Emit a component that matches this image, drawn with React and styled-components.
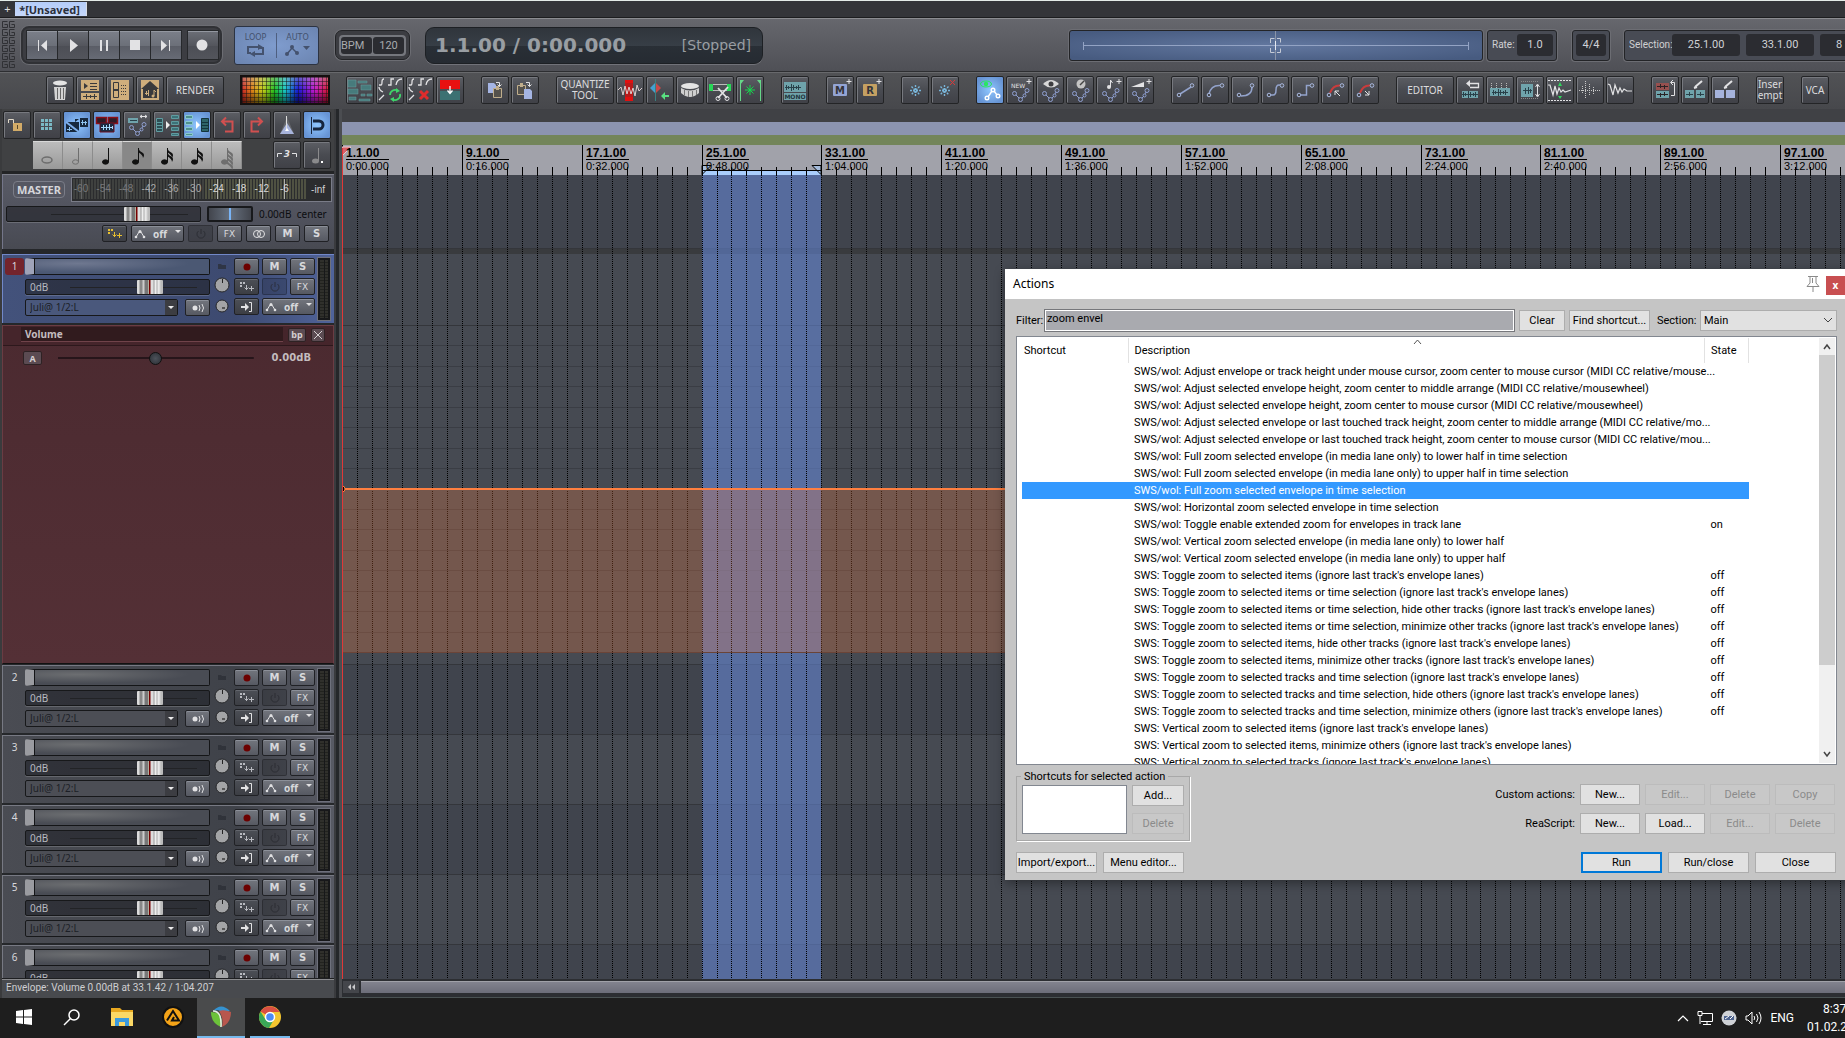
import React from 'react'
import styled, { createGlobalStyle, css } from 'styled-components'

const ui = '"Noto Sans", "Open Sans", sans-serif'
const small = 'Roboto, "Liberation Sans", sans-serif'
const arial = '"Liberation Sans", Arial, sans-serif'

const GlobalStyle = createGlobalStyle`
  * {
    box-sizing: border-box;
  }
  body {
    margin: 0;
    background: #47494d;
    overflow: hidden;
  }
  button, input, select {
    font: inherit;
    color: inherit;
    margin: 0;
    padding: 0;
    border: 0;
    border-radius: 0;
  }
`

const Page = styled.div`
  position: relative;
  display: flex;
  flex-direction: column;
  height: 100vh;
  overflow: hidden;
  background: #47494d;
  color: #d0d0d2;
  font: 11px/14px ${ui};
`

/* ---------- project tabs ---------- */

const TabBar = styled.div`
  flex: none;
  display: flex;
  align-items: center;
  height: 18px;
  padding-left: 2px;
  border-top: 1px solid #e4ece8;
  border-bottom: 1px solid #1c1d1f;
  background: #343539;
`

const AddTab = styled.button`
  width: 11px;
  background: none;
  color: #e0e0e0;
  font: 11px/14px ${ui};
`

const Tab = styled.button`
  width: 72px;
  height: 14px;
  margin-left: 2px;
  padding-right: 2px;
  background: linear-gradient(#b4ccf8, #c6d8fa);
  border-right: 1px solid #d8dce4;
  color: #2b303c;
  white-space: nowrap;
  font: bold 11px/13px ${ui};
`

/* ---------- transport ---------- */

const Transport = styled.div`
  flex: none;
  display: flex;
  align-items: center;
  height: 54px;
  padding-left: 2px;
  border-top: 1px solid #8b8c90;
  border-bottom: 1px solid #2d2e31;
  background: linear-gradient(#66676d, #4f5056);
  overflow: hidden;
`

const Well = styled.div`
  flex: none;
  display: flex;
  align-items: center;
  border: 1px solid #232427;
  box-shadow: 0 0 0 1px #6c6d73;
  background: #3c3d42;
`

const PlayWell = styled(Well)`
  gap: 5px;
  height: 38px;
  width: 201px;
  margin-left: 6px;
  padding: 0 3px;
  border: 2px solid #303135;
  border-radius: 8px;
`

const PlayGroup = styled.div`
  display: flex;
  gap: 1px;
  border: 1px solid #26282b;
  background: #26282b;
`

const PlayButton = styled.button`
  display: block;
  width: 30px;
  height: 28px;
  border-top: 1px solid #9397a0;
  background: ${({ $dark }) => $dark
    ? 'linear-gradient(#6a6d75, #54565d 50%, #4c4e55 51%, #53555c)'
    : 'linear-gradient(#7a7e88, #6c7079 50%, #5a5d66 51%, #676b75)'};
`

const LoopAuto = styled.div`
  flex: none;
  display: flex;
  width: 85px;
  height: 39px;
  margin-left: 12px;
  padding: 6px 0;
  border: 1px solid #2c3342;
  border-radius: 3px;
  background: radial-gradient(#7f9cce, #6b84b0);
`

const LoopButton = styled.button`
  flex: 1;
  display: flex;
  flex-direction: column;
  align-items: center;
  background: none;
  color: #44526e;
  font: 8px/10px "DejaVu Sans", sans-serif;
  & + & {
    border-left: 1px solid #4e5f80;
  }
`

const BpmWell = styled(Well)`
  width: 75px;
  height: 30px;
  margin-left: 16px;
  padding: 3px;
  border-radius: 7px;
`

const BpmInner = styled.div`
  display: flex;
  flex: 1;
  gap: 1px;
  padding: 2px;
  border-radius: 4px;
  background: #75777d;
`

const DarkBox = styled.span`
  flex: none;
  display: block;
  width: ${({ $w }) => $w}px;
  height: 22px;
  border-radius: 3px;
  background: #2b2c31;
  color: #d0d2d6;
  text-align: center;
  font: 11px/22px ${small};
  & + & {
    margin-left: 6px;
  }
`

const BpmBox = styled.span`
  width: 31px;
  height: 17px;
  border-radius: 3px;
  background: #2b2c31;
  color: #a8aaad;
  text-align: ${({ $left }) => $left ? 'left' : 'center'};
  font: 11px/17px ${small};
`

const BigTime = styled.div`
  flex: none;
  display: flex;
  justify-content: space-between;
  align-items: center;
  width: 338px;
  height: 37px;
  margin-left: 15px;
  padding: 0 11px 0 9px;
  border: 1px solid #1d2024;
  border-radius: 9px;
  box-shadow: 0 1px 0 #717279;
  background: linear-gradient(#30353c, #373e46 50%, #292f36 51%, #262b32);
  color: #999ea3;
  font: 14px/20px "DejaVu Sans", sans-serif;
  strong {
    font-size: 20px;
  }
`

const Shuttle = styled(Well)`
  width: 414px;
  height: 31px;
  margin-left: auto;
  border-radius: 3px;
  background: radial-gradient(ellipse at center, #62779f, #475b80 90%);
`

const InfoWell = styled(Well)`
  height: 31px;
  margin-left: ${({ $gap }) => $gap}px;
  margin-right: ${({ $bleed }) => $bleed ? -17 : 0}px;
  padding: 0 3px 0 ${({ $pad }) => $pad}px;
  border-radius: 3px;
  background: #484b54;
  font: 10px/22px ${small};
`

const InfoLabel = styled.span`
  width: ${({ $w }) => $w}px;
  white-space: nowrap;
`

/* ---------- toolbars ---------- */

const Toolbar = styled.div`
  flex: none;
  display: flex;
  gap: 17px;
  height: 37px;
  padding: 3px 0 0 46px;
  border-top: 1px solid #68696c;
  background: linear-gradient(#515255, #47484c);
  overflow: hidden;
`

const Group = styled.div`
  flex: none;
  display: flex;
  gap: 2px;
`

const ToolButton = styled.button`
  flex: none;
  width: ${({ $w }) => $w || 28}px;
  height: 28px;
  border: 1px solid #232426;
  border-radius: 2px;
  box-shadow: inset 1px 1px 0 #77797f;
  background: linear-gradient(#5c5e64, #494b51 50%, #404147);
  color: #dcdcde;
  font: 10px/11px ${ui};
  svg {
    display: block;
    margin: -1px;
  }
  ${({ $on }) => $on && css`
    box-shadow: none;
    background: radial-gradient(#8ec6ff, #6794d4 80%);
  `}
`

const Palette = styled.button`
  width: 90px;
  height: 30px;
  margin: -1px -1px 0;
  border: 2px solid #15100f;
  background:
    repeating-linear-gradient(90deg, rgba(20, 20, 20, 0.5) 0 1px, transparent 1px 4px),
    repeating-linear-gradient(rgba(20, 20, 20, 0.5) 0 1px, transparent 1px 4px),
    linear-gradient(rgba(170, 170, 170, 0.5), rgba(100, 100, 100, 0.1) 50%, rgba(0, 0, 0, 0.6)),
    linear-gradient(90deg, #e02020, #f08a10 12%, #d8e010 24%, #18d018 38%, #10d8d8 50%, #1010e8 65%, #d010e0 84%, #e81030);
`

const Columns = styled.div`
  flex: 1;
  min-height: 0;
  display: flex;
`

const Left = styled.div`
  flex: none;
  display: flex;
  flex-direction: column;
  width: 334px;
  border-left: 2px solid #3a3b3d;
  background: #3f4043;
`

const LeftTools = styled.div`
  flex: none;
  display: flex;
  flex-direction: column;
  gap: 2px;
  height: 65px;
  padding: 2px 0 0 1px;
  background: #404143;
  border-bottom: 3px solid #232426;
`

const NoteRow = styled.div`
  display: flex;
  padding-left: 30px;
  gap: 2px;
`

const Notes = styled.div`
  display: flex;
  width: 209px;
  height: 28px;
  margin-right: 29px;
`

const NoteButton = styled.button`
  flex: 1;
  border-right: 1px solid #8c8c8c;
  border-top: 1px solid #d8d8d8;
  background: ${({ $dark }) => $dark ? '#888' : 'linear-gradient(#bcbcbc, #999)'};
  svg {
    display: block;
  }
`

/* ---------- track panel ---------- */

const Small = styled.button`
  flex: none;
  display: flex;
  align-items: center;
  justify-content: center;
  width: ${({ $w }) => $w || 25}px;
  height: 17px;
  border: 1px solid #202125;
  border-radius: 2px;
  box-shadow: inset 0 1px 0 #8b8f98;
  background: linear-gradient(#72757d, #565962);
  color: #d8d9dc;
  font: bold 10px/14px "DejaVu Sans", sans-serif;
  ${({ $sunk }) => $sunk && css`
    box-shadow: none;
    background: rgba(0, 0, 0, 0.16);
    border-color: rgba(0, 0, 0, 0.25);
  `}
  ${({ $dark }) => $dark && css`
    background: linear-gradient(#4c4f56, #3c3e44);
    box-shadow: inset 0 1px 0 #63666d;
  `}
`

const Fx = styled.span`
  font: 9px/14px "DejaVu Sans", sans-serif;
`

const Off = styled.span`
  margin: 0 8px 0 7px;
  font: bold 10px/14px ${ui};
`

const Master = styled.div`
  flex: none;
  display: flex;
  flex-direction: column;
  height: 75px;
  padding: 2px 2px 0 4px;
  border-top: 1px solid #7d7f8a;
  border-left: 1px solid #74768a;
  background: linear-gradient(#595b66, #4f515c 60%, #484a52);
`

const MasterTop = styled.div`
  display: flex;
  gap: 6px;
  padding-left: 6px;
  height: 26px;
`

const MasterLabel = styled.button`
  width: 52px;
  height: 17px;
  margin-top: 4px;
  border: 1px solid #7b7d88;
  border-radius: 4px;
  background: #555762;
  color: #d6d6da;
  font: bold 11px/14px ${ui};
`

const Meter = styled.div`
  display: flex;
  flex: 1;
  justify-content: space-between;
  height: 25px;
  padding-right: 6px;
  border: 1px solid #7a7c88;
  background: #2b2c2e;
  font: 10px/23px ${arial};
`

const Fader = styled.div`
  display: flex;
  align-items: center;
  width: ${({ $w }) => $w}px;
  height: 16px;
  padding-right: 12px;
  border: 1px solid #17181a;
  border-radius: 2px;
  background: rgba(34, 36, 42, 0.62);
  box-shadow: 0 1px 0 rgba(255, 255, 255, 0.16);
  color: #b8bac0;
  font: 10px/14px ${ui};
  label {
    flex: none;
    width: 44px;
    padding-left: 4px;
  }
`

const Slider = styled.input`
  appearance: none;
  flex: 1;
  min-width: 0;
  height: 14px;
  background: linear-gradient(#222326, #222326) center / 100% 1px no-repeat;
  &::-webkit-slider-thumb {
    appearance: none;
    width: 26px;
    height: 14px;
    border-radius: 1px;
    background: linear-gradient(90deg, #ddd 0 2px, #888 3px 5px, #ccc 6px 7px, #777 8px 11px, #e8e8c8 12px, #700 12px 13px, #ddd 14px 16px, #999 17px, #eee 18px 19px, #aaa 20px, #e8e8e8 21px 22px, #bbb 24px 26px);
  }
`

const MasterFaders = styled.div`
  display: flex;
  align-items: center;
  gap: 6px;
  height: 22px;
  margin-left: -1px;
  color: #0c0d10;
  font: 10px/14px ${ui};
  > span {
    white-space: nowrap;
  }
`

const Pan = styled.div`
  width: 46px;
  height: 16px;
  border: 2px solid #18191c;
  border-radius: 2px;
  background:
    linear-gradient(#79b4f6, #79b4f6) center / 2px 100% no-repeat,
    linear-gradient(90deg, #42454d, #66707e, #42454d);
`

const ButtonRow = styled.div`
  display: flex;
  justify-content: flex-end;
  gap: 4px;
  padding-right: 3px;
`

const Tracks = styled.div`
  flex: 1;
  min-height: 0;
  overflow: hidden;
  padding-top: 5px;
  border-bottom: 1px solid #1e1f21;
  background: #25272a;
`

const TrackBox = styled.section`
  display: grid;
  grid-template-columns: 17px 185px 18px 81px 13px;
  column-gap: 3px;
  align-items: start;
  height: ${({ $on }) => $on ? 69 : 68}px;
  margin-bottom: 2px;
  padding: 3px 0 0 2px;
  border-top: 1px solid ${({ $on }) => $on ? '#7288c8' : '#777983'};
  border-left: 1px solid ${({ $on }) => $on ? '#7288c8' : '#777983'};
  background: ${({ $on }) => $on
    ? 'linear-gradient(90deg, #43527b, #3d4a70 70%, #50639a)'
    : 'linear-gradient(90deg, #4a4c53, #3f4249 70%, #585a64)'};
`

const TrackNo = styled.span`
  width: 19px;
  height: 17px;
  border-radius: 3px;
  background: ${({ $on }) => $on ? '#74242c' : 'none'};
  color: #d8d8dc;
  text-align: center;
  font: 10px/17px ${ui};
`

const Stack = styled.div`
  display: flex;
  flex-direction: column;
  gap: 4px;
`

const NameInput = styled.input`
  display: block;
  width: 185px;
  height: 17px;
  border: 1px solid #141517;
  border-left: 9px solid ${({ $on }) => $on ? '#9fa3b8' : '#9a9ba0'};
  border-radius: 2px;
  box-shadow: inset 1px 0 0 #141517;
  background: ${({ $on }) => $on
    ? 'radial-gradient(ellipse at 25% 30%, #6f7890, #4b5873 60%)'
    : 'radial-gradient(ellipse at 25% 30%, #6c6e71, #494c54 60%)'};
`

const InRow = styled.div`
  display: flex;
  justify-content: space-between;
`

const InputPick = styled.span`
  position: relative;
  width: 153px;
  select {
    appearance: none;
    display: block;
    width: 153px;
    height: 17px;
    padding-left: 4px;
    border: 1px solid #17181a;
    border-radius: 2px;
    background: ${({ $on }) => $on ? '#4a587c' : '#4c4e55'};
    color: #1c1f26;
    font: 10px/15px ${ui};
  }
  svg {
    position: absolute;
    right: 1px;
    top: 1px;
    pointer-events: none;
  }
`

const KnobColumn = styled(Stack)`
  align-items: center;
  gap: 5px;
  padding-top: 4px;
  svg {
    display: block;
  }
`

const Cells = styled.div`
  display: grid;
  grid-template-columns: 25px 25px 25px;
  gap: 3px;
`

const SideMeter = styled.div`
  width: 12px;
  height: 62px;
  border: 2px solid #17181a;
  outline: 1px solid #6e707c;
  background:
    linear-gradient(#17181a, #17181a) center / 1px 100% no-repeat,
    repeating-linear-gradient(#30302c 0 2px, #22231f 2px 3px);
`

const EnvBox = styled.section`
  height: 339px;
  margin-bottom: 1px;
  border: 1px solid #6a3c43;
  border-bottom: 1px solid #111;
  background: linear-gradient(#4b2a30, #543036);
  color: #c3bcbe;
`

const EnvHead = styled.div`
  display: flex;
  align-items: center;
  height: 20px;
  padding: 0 8px 2px 18px;
  gap: 5px;
  border-bottom: 1px solid #2d181c;
  background: #45252b;
`

const EnvName = styled.div`
  flex: 1;
  height: 15px;
  padding-left: 4px;
  border-bottom: 1px solid #70434a;
  background: #311b1e;
  font: bold 10px/14px ${ui};
`

const EnvButton = styled.button`
  width: ${({ $w }) => $w}px;
  height: 14px;
  border: 1px solid #2e2224;
  border-radius: 2px;
  background: #5b4b52;
  color: #d5cfd1;
  font: bold 9px/11px ${ui};
  svg {
    display: block;
    margin: auto;
  }
`

const EnvBody = styled.div`
  display: flex;
  align-items: center;
  height: 24px;
  padding: 0 22px 0 20px;
  font: bold 10px/14px "DejaVu Sans", sans-serif;
`

const EnvSlider = styled(Slider)`
  margin: 0 18px 0 16px;
  background: linear-gradient(#26151a, #26151a) center / 100% 2px no-repeat;
  &::-webkit-slider-thumb {
    width: 13px;
    height: 13px;
    border: 1px solid #111;
    border-radius: 50%;
    background: radial-gradient(#4d525a, #2a2e34);
  }
`

const Status = styled.div`
  flex: none;
  height: 19px;
  padding-left: 4px;
  border-top: 1px solid #8a8b8e;
  background: #484a4e;
  color: #cfcfd1;
  font: 10px/15px ${small};
`

/* ---------- arrange ---------- */

const Splitter = styled.div`
  flex: none;
  width: 8px;
  border-left: 2px solid #3a3b3e;
  border-right: 3px solid #4b4d51;
  background: #25272a;
`

const Arrange = styled.main`
  flex: 1;
  min-width: 0;
  display: flex;
  flex-direction: column;
`

const Strip = styled.div`
  flex: none;
  height: ${({ $h }) => $h}px;
  background: ${({ $c }) => $c};
`

const Ruler = styled.div`
  flex: none;
  position: relative;
  display: flex;
  height: 30px;
  overflow: hidden;
  background: #a1a2aa;
  color: #000;
  > svg {
    position: absolute;
    inset: 0;
  }
`

const Mark = styled.div`
  position: relative;
  flex: none;
  padding: 2px 0 0 4px;
  font: 11px/13px ${arial};
  strong {
    display: block;
    width: 43px;
    height: 13px;
    border-bottom: 1px solid #000;
    font-size: 12px;
    line-height: 12px;
  }
  span {
    display: block;
    white-space: nowrap;
  }
`

const Canvas = styled.div`
  position: relative;
  flex: 1;
  min-height: 0;
  overflow: hidden;
  background: #40444d;
  > svg {
    position: absolute;
    inset: 0;
  }
`

const Lane = styled.div`
  height: ${({ $h }) => $h}px;
  border-bottom: 1px solid #34363b;
  background: ${({ $light }) => $light ? '#464a52' : '#40444d'};
`

const LaneGap = styled.div`
  height: 5px;
  background: #393b3e;
`

const HScroll = styled.div`
  flex: none;
  display: flex;
  align-items: center;
  gap: 2px;
  height: 19px;
  padding: 0 0 2px 1px;
  background: #2c2e32;
  border-bottom: 1px solid #4a5253;
`

const ScrollLeft = styled.button`
  width: 16px;
  height: 12px;
  background: #44464b;
  svg {
    display: block;
    margin: auto;
  }
`

const ScrollThumb = styled.div`
  flex: 1;
  height: 12px;
  border-top: 1px solid #a0a1a8;
  background: linear-gradient(#82838e, #6c6d79);
`

/* ---------- actions window ---------- */

const Dialog = styled.div`
  position: absolute;
  left: 1005px;
  top: 269px;
  width: 844px;
  background: #c5c5c5;
  box-shadow: 0 3px 10px rgba(0, 0, 0, 0.4);
  color: #000;
  font: 11px/17px ${small};
`

const TitleBar = styled.header`
  display: flex;
  align-items: center;
  height: 30px;
  padding: 0 0 0 8px;
  background: #fff;
  font: 12px/16px ${ui};
  span {
    flex: 1;
  }
`

const CloseX = styled.button`
  width: 23px;
  height: 19px;
  margin: 2px 0 0 5px;
  padding-right: 4px;
  background: #c84f51;
  color: #fff;
  font: bold 10px/16px ${ui};
`

const DialogBody = styled.div`
  padding: 10px 12px 7px 11px;
`

const FilterRow = styled.div`
  display: flex;
  align-items: center;
  gap: 4px;
  height: 23px;
  margin-bottom: 4px;
`

const FilterLabel = styled.label`
  width: 24px;
  white-space: nowrap;
`

const SectionLabel = styled.label`
  width: 39px;
  margin-left: 3px;
  white-space: nowrap;
`

const FilterInput = styled.input`
  flex: 1;
  min-width: 0;
  height: 23px;
  padding: 0 2px 4px;
  border: 1px solid #76777b;
  outline: 1px solid #fff;
  outline-offset: -2px;
  background: #a9aaaf;
`

const WinButton = styled.button`
  flex: none;
  width: ${({ $w }) => $w || 81}px;
  height: 21px;
  border: 1px solid #adadad;
  background: #e1e1e1;
  text-align: center;
  white-space: nowrap;
  ${({ $main }) => $main && css`
    border: 2px solid #0078d7;
  `}
  &:disabled {
    border-color: #bcbcbc;
    background: #c8c8c8;
    color: #8b8b8b;
  }
`

const SectionPick = styled.span`
  position: relative;
  width: 137px;
  select {
    appearance: none;
    display: block;
    width: 137px;
    height: 21px;
    padding: 0 3px;
    border: 1px solid #adadad;
    background: #e1e1e1;
  }
  svg {
    position: absolute;
    right: 4px;
    top: 6px;
    pointer-events: none;
  }
`

const ListBox = styled.div`
  display: flex;
  justify-content: space-between;
  align-items: flex-start;
  height: 429px;
  padding: 1px 1px 1px 5px;
  border: 1px solid #828790;
  background: #fff;
  overflow: hidden;
`

const ListTable = styled.table`
  width: 727px;
  table-layout: fixed;
  border-collapse: collapse;
  th {
    position: relative;
    height: 25px;
    padding: 0 6px;
    border-right: 1px solid #e2e2e2;
    font-weight: normal;
    text-align: left;
  }
  th:first-child {
    width: 106px;
    padding-left: 2px;
  }
  th:last-child {
    width: 44px;
  }
  th svg {
    position: absolute;
    left: 284px;
    top: 1px;
  }
  td {
    height: 17px;
    padding: 0 0 0 6px;
    white-space: nowrap;
  }
`

const ActionRow = styled.tr`
  ${({ $on }) => $on && css`
    background: #3399ff;
    color: #fff;
  `}
`

const VScroll = styled.div`
  display: flex;
  flex-direction: column;
  width: 16px;
  height: 425px;
  background: #f0f0f0;
  svg {
    flex: none;
    display: block;
  }
`

const VThumb = styled.div`
  height: 310px;
  margin-bottom: auto;
  background: #cdcdcd;
`

const Bottom = styled.div`
  display: grid;
  grid-template-columns: 173px 1fr;
  margin-top: 3px;
`

const Shortcuts = styled.fieldset`
  display: grid;
  grid-template-columns: 105px 52px;
  grid-auto-rows: 21px;
  align-content: start;
  gap: 7px 5px;
  height: 73px;
  margin: 0;
  padding: 1px 5px 0;
  border: 1px solid #a8a8a8;
  box-shadow: 1px 1px 0 #fff;
  legend {
    height: 16px;
    padding: 0 3px;
    margin-left: -1px;
  }
`

const ShortcutList = styled.div`
  grid-row: span 2;
  border: 1px solid #828790;
  background: #fff;
`

const RightButtons = styled.div`
  display: grid;
  grid-template-columns: 1fr repeat(4, 60px);
  grid-auto-rows: 21px;
  gap: 8px 5px;
  justify-items: end;
  align-items: center;
  padding-top: 16px;
  padding-right: 2px;
`

const Footer = styled.div`
  display: flex;
  gap: 6px;
  margin-top: 11px;
  padding-right: 1px;
  button:nth-child(3) {
    margin-left: auto;
  }
`

/* ---------- taskbar ---------- */

const Taskbar = styled.footer`
  flex: none;
  display: flex;
  height: 40px;
  background: #1e1e1e;
  color: #fff;
  overflow: hidden;
`

const TaskButton = styled.button`
  flex: none;
  display: flex;
  align-items: center;
  justify-content: center;
  width: ${({ $w }) => $w || 48}px;
  background: ${({ $on }) => $on ? '#4a4b4c' : 'none'};
  border-bottom: 2px solid ${({ $run }) => $run ? '#76b9ed' : 'transparent'};
  ${({ $on }) => $on && css`
    margin-right: 5px;
  `}
`

const Tray = styled.div`
  display: flex;
  align-items: center;
  gap: 8px;
  margin-left: auto;
  font: 12px/16px ${small};
`

const Clock = styled.div`
  width: 38px;
  margin-left: 5px;
  line-height: 18px;
  white-space: nowrap;
  overflow: hidden;
  div:first-child {
    padding-left: 16px;
  }
`

/* ---------- drawings ---------- */

const teal = '#6fa3ab'
const W = '#e2e2e4'
const wave = 'M0 0h1v-2h1v2h1v-1h1v1h2v-3h1v3h1v-2h1v2h2v-1h1v1h1v-2h1v2h2v1h-2v2h-1v-2h-1v1h-1v-1h-2v2h-1v-2h-1v3h-1v-3h-2v1h-1v-1h-1v2h-1v-2h-1z'

const Svg = ({ s = 28, w, h, children }) => (
  <svg width={w || s} height={h || s} viewBox={`0 0 ${w || s} ${h || s}`} fill="none" aria-hidden="true">
    {children}
  </svg>
)

const Nodes = ({ y = 0, c = '#8f9fd0' }) => (
  <g stroke={c} transform={`translate(0 ${y})`}>
    <path d="M10 17l3 3M16 20l2-2M19 16l1-2" />
    <circle cx="8.500" cy="15.500" r="2" /><circle cx="14.500" cy="21.500" r="2" />
    <circle cx="18.500" cy="17.500" r="1.500" /><circle cx="21" cy="12.500" r="2" />
  </g>
)

const Plus = () => <path d="M23 3v5M20.500 5.500h5" stroke={W} />

const curve = (d, red, arrow) => (
  <>
    <path d={d} stroke={red ? '#c83c3c' : '#93a3cc'} strokeWidth={red ? 2 : 1.5} />
    <circle cx="8" cy="19" r="1.800" stroke="#a9b9e0" /><circle cx="21" cy="9.500" r="1.800" stroke="#a9b9e0" />
    {arrow && <path d={arrow} stroke={W} />}
  </>
)

const squiggles = (
  <g stroke={W} strokeWidth="1.300">
    <path d="M3 9h2q1 0 1-3t2-3M12 9h3V3h3M20 9q1-6 6-6M3 11q0 3 4 5M3 24l5-5" />
  </g>
)

const icons = {
  trash: <><ellipse cx="14" cy="7" rx="7" ry="2.500" fill="#e4e4e4" /><path d="M8 11h12l-1 13H9z" fill="#d4d4d4" /><path d="M11.500 12v11M14.500 12v11M17.500 12v11" stroke="#666" /></>,
  tracklist: <><path d="M5 4h18v11H5zM5 17h18v7H5z" fill="#cfae7c" /><path d="M8 7l4 3-4 3z" fill="#3a3a3c" /><path d="M14 7.500h7M14 10.500h7M14 13.500h7M7 20.500h14M10.500 18v5M14.500 19v3M18.500 18v5" stroke="#3a3a3c" /></>,
  mixer: <><path d="M5 4h18v20H5z" fill="#cfae7c" /><path d="M7.500 6.500h5v15h-5z" stroke="#3a3a3c" /><path d="M8 13h4v2H8z" fill="#3a3a3c" /><path d="M15 9.500h6M15 12.500h6M15 15.500h6M15 18.500h6" stroke="#3a3a3c" strokeDasharray="1 1" /></>,
  home: <><path d="M5 4h18v20H5z" fill="#cfae7c" /><path d="M14 5l9 8h-2v9H7v-9H5z" fill="#3a3a3c" /><path d="M9 17.500h4M10.500 15v4M12.500 14v6M18 20v-6l2 2" stroke="#cfae7c" /><circle cx="17" cy="20" r="1.500" fill="#cfae7c" /></>,
  blocks: <path d="M2 4h8v7H2zM12 5h9v2h-9zM15 9h10v5H15zM2 13h10v5H2zM15 18h4v2h-4zM21 18h5v2h-5zM3 21h7v3H3zM13 23h11v2H13z" fill="#477b7c" stroke="#6b9c9c" strokeWidth="0.500" />,
  envCycle: <>{squiggles}<path d="M14 19a5 5 0 0 1 8-4M24 18a5 5 0 0 1-8 5" stroke="#3fd46a" strokeWidth="1.800" /><path d="M20 12l4 3-4 2zM18 26l-4-3 4-2z" fill="#3fd46a" /></>,
  envX: <>{squiggles}<path d="M14 15l8 8M22 15l-8 8" stroke="#e02c2c" strokeWidth="3" /></>,
  redDown: <><path d="M4 4h20v9H4z" fill="#e81010" /><path d="M4 15h20v9H4z" fill="#3c7172" /><path d="M14 10v7M11.500 14.500l2.500 3 2.500-3" stroke="#fff" strokeWidth="1.300" /></>,
  copy: <><path d="M7 7h6l2 2v8H7z" fill="#a5b5e4" /><path d="M12.500 12.500h8v9h-8z" fill="#55524c" stroke="#c0ae8c" /><path d="M15 10h3v4h-3z" fill="#c0ae8c" /><path d="M15 6.500h3.500v4M16.500 8.500l2 2 2-2" stroke={W} /></>,
  paste: <><path d="M6.500 9.500h8v9h-8z" fill="#55524c" stroke="#c0ae8c" /><path d="M9 7h3v4H9z" fill="#c0ae8c" /><path d="M13 13h6l2 2v8h-8z" fill="#a5b5e4" /><path d="M15 6.500h3.500v4M16.500 8.500l2 2 2-2" stroke={W} /></>,
  quantWave: <><path d="M9 4h8v21H9z" fill="#b81a1a" /><path d="M9 4h8v3H9zM9 21h8v4H9z" fill="#e01010" /><path d="M2 14l3-3 2 8 2-9 2 8 2-7 2 7 2-6 2 8 2-11 2 6 3-3" stroke="#dcd0d0" /></>,
  diamond: <><path d="M9 7v10l-5-5z" fill="#44a0d0" /><path d="M10 7l5 5-5 5z" fill="#c84848" /><path d="M9.500 3v22" stroke="#3b8080" /><path d="M15 20l4-4v3h4v2h-4v3z" fill="#58e080" /></>,
  tom: <><ellipse cx="14" cy="10" rx="9" ry="3" fill="#e4e4e4" /><path d="M5 12q9 5 18 0v5q-9 8-18 0z" fill="#cfcfcf" /><path d="M8.500 14v5M12.500 15v6M16.500 15v6M20.500 14v5" stroke="#777" /></>,
  scissors: <><path d="M5 8.500h18M5 14.500h18" stroke="#bbb" /><path d="M3 8h4v7H3zM21 8h4v7h-4z" fill="#28d858" /><path d="M12 22L22 11M12 12l9 10" stroke={W} strokeWidth="1.800" /><circle cx="12" cy="22.500" r="2" stroke={W} /><circle cx="21" cy="22.500" r="2" stroke={W} /></>,
  star: <><path d="M4.500 25V6M24.500 25V6" stroke="#66d888" /><path d="M4 4h4L4 9zM25 4h-4l4 5z" fill="#66d888" /><path d="M14 9v10M9 14h10M10.500 10.500l7 7M17.500 10.500l-7 7" stroke="#16d84c" /></>,
  mono: <><path d="M3 6h22v10H3z" fill={teal} /><path transform="translate(4 11)" d={wave} fill="#29414a" /><path d="M3 17h22v7H3z" fill={teal} /><text x="14" y="23" textAnchor="middle" fontSize="6" fontWeight="bold" fontFamily="DejaVu Sans" fill="#1f343b">MONO</text></>,
  markM: <><rect x="7" y="8" width="14" height="12" rx="1" fill="#93a4d4" /><text x="14" y="18" textAnchor="middle" fontSize="10" fontWeight="bold" fontFamily="DejaVu Sans" fill="#33343a">M</text><Plus /></>,
  markR: <><rect x="7" y="8" width="14" height="12" rx="1" fill="#c4a062" /><text x="14" y="18" textAnchor="middle" fontSize="10" fontWeight="bold" fontFamily="DejaVu Sans" fill="#33343a">R</text><Plus /></>,
  freeze: <path d="M14.500 9v11M9 14.500h11M10.500 10.500l8 8M18.500 10.500l-8 8" stroke="#78b4d8" strokeDasharray="2 1" strokeWidth="1.400" />,
  unfreeze: <><path d="M13.500 9v11M8 14.500h11M9.500 10.500l8 8M17.500 10.500l-8 8" stroke="#78b4d8" strokeDasharray="2 1" strokeWidth="1.400" /><path d="M19 4l5 5M24 4l-5 5" stroke="#d83838" /></>,
  envEye: <><ellipse cx="10" cy="8" rx="5.500" ry="3" stroke="#28e860" /><circle cx="10" cy="8" r="2.200" fill="#28e860" /><g stroke="#fff" strokeWidth="1.400"><path d="M12 21l4-6M18 15l3 4" /><circle cx="11" cy="22" r="1.800" /><circle cx="17" cy="14" r="1.800" /><circle cx="22" cy="20" r="1.800" /></g></>,
  envNew: <><text x="5" y="12" fontSize="6" fontFamily="DejaVu Sans" fill={W}>NEW</text><Plus /><Nodes y={2} /></>,
  envSee: <><path d="M7 8q8-8 16 0q-8 7-16 0z" fill="#d8d8d8" /><circle cx="15" cy="8" r="2.500" fill="#3d3d40" /><Nodes y={2} /></>,
  envKnob: <><circle cx="15" cy="8" r="4.500" fill="#c4c4c4" /><path d="M14 9l4-4" stroke="#444" strokeWidth="1.500" /><Nodes y={2} /></>,
  envNote: <><circle cx="13" cy="11" r="2" fill={W} /><path d="M14.500 11V4l2 3" stroke={W} /><Plus /><Nodes y={2} /></>,
  envVol: <><path d="M5 11l13-5v5z" fill={W} /><Plus /><Nodes y={2} /></>,
  shapeLine: curve('M9 18L20 11'),
  shapeFast: curve('M8 18Q10 9 19 9.500'),
  shapeSlow: curve('M10 20Q21 20 21 11'),
  shapeS: curve('M10 19h2q3 0 3-5t3-5h1'),
  shapeSquare: curve('M10 19h5.500V9.500H19'),
  shapeIn: curve('M9 17Q12 9 19 9.500', true, 'M14 15l5 5M14 19v-4h4'),
  shapeOut: curve('M9 17Q12 9 19 9.500', true, 'M14 15l4 4M18 15v4h-4'),
  loopBack: <><path d="M14 4l-4 3.500 4 3.500z" fill={W} /><path d="M12 7.500h10.500v4H14" stroke={W} strokeWidth="1.300" /><path d="M6 15h16v7H6z" fill={teal} /><path transform="translate(6 18)" d={wave} fill="#29414a" /></>,
  dots: <><path d="M5.500 7v5M10.500 7v5M15.500 7v5M20.500 7v5" stroke="#bbb" strokeDasharray="1 1" /><path d="M4 12h20v8H4z" fill={teal} /><path transform="translate(6 16)" d={wave} fill="#29414a" /></>,
  heightTool: <><path d="M5 8h12v13H5z" fill={teal} /><path d="M7 14.500h9M9.500 12v6M12.500 11v7M14.500 13v4" stroke="#29414a" /><path d="M5 5.500h18M5 22.500h18" stroke="#888" strokeDasharray="1 1" /><path d="M21.500 9v11M19.500 11l2-3 2 3M19.500 18l2 3 2-3" stroke={W} /></>,
  waveUpDown: <><path d="M2 4.500h24M2 24.500h24" stroke={W} strokeDasharray="2 1" /><path d="M2 9h2l3 10 2-9 2 8 2-6 2 4 2-2 2 2 6-2" stroke={W} strokeWidth="1.200" /><path d="M14 6l2 4h-4zM14 23l2-3h-4z" fill="#2fd45c" /></>,
  waveDots: <path d="M3 14.500h22M9.500 5v18M6.500 10v8M13.500 8v12M17.500 11v7" stroke="#c8c8c8" strokeDasharray="1 1" />,
  wavePlain: <path d="M2 8l2 1 3 10 2-10 3 8 2-5 2 4 2-3 3 2h5" stroke={W} strokeWidth="1.200" />,
  takes: <><path d="M5 7h13v7H5z" fill="#97504f" /><path d="M5 15h13v7H5z" fill={teal} /><path d="M6 10.500h11M6 18.500h11M9.500 8v4M13.500 9v4M9.500 17v4M13.500 16v4" stroke="#2a2224" /><path d="M20 19.500h3.500v-13H20M22 4l-2.500 2.500L22 9" stroke={W} /></>,
  glue: <><path d="M4 14h9v8H4zM15 14h9v8h-9z" fill={teal} /><path d="M5 18.500h7M16 18.500h7M8.500 16v4M19.500 16v4" stroke="#29414a" /><path d="M14 11l7-6M16 11l-3 1" stroke={W} strokeWidth="2" /></>,
  cut: <><path d="M4 14h9v8H4zM15 14h9v8h-9z" fill="#a5b3dc" /><path d="M14 11l7-6M16 11l-3 1" stroke={W} strokeWidth="2" /></>,
  lock: <><path d="M10 12h9v8h-9z" fill="#d2ab68" /><path d="M14 14h1v4h-1z" fill="#55472c" /><path d="M5.500 12V8.500h5V12" stroke="#e0d8c8" /></>,
  grid: <path d="M8 8h3v3H8zM12 8h3v3h-3zM16 8h3v3h-3zM8 12h3v3H8zM12 12h3v3h-3zM16 12h3v3h-3zM8 16h3v3H8zM12 16h3v3h-3zM16 16h3v3h-3z" fill="#7ab8c4" />,
  crossfade: <><path d="M3 11h13v10H3z" fill="#17293e" /><path d="M3 11l13 10" stroke="#7fb0ec" strokeWidth="2" /><path d="M12 8h4l-4 3zM17 7h8v9h-8z" fill="#17293e" /><path d="M18 11.500h6M19.500 9v5M22.500 10v4M4 18.500h5M6.500 16v4" stroke="#8fc4f0" /></>,
  grouping: <><path d="M3.500 6.500h10v6h-10zM15.500 6.500h9v6h-9z" fill="#2c1c28" stroke="#8c1018" strokeWidth="1.500" /><path d="M7 12h14v9H7z" fill="#1b2c42" stroke="#6c1020" /><path d="M8 16.500h12M10.500 14v5M13.500 14v5M16.500 13v6M19.500 15v3" stroke="#a8d8fa" /></>,
  moveEnv: <><path d="M5 7h10v5H5z" fill={teal} /><path d="M7 9.500h7" stroke="#29414a" /><path d="M17 5.500h7M19 4l-2 1.500 2 1.500M22 4l2 1.500-2 1.500" stroke={W} /><Nodes y={1} /></>,
  ripA: <><path d="M3.500 7.500h6v13h-6z" fill="#2d4e54" stroke="#5f9ca0" /><path d="M3 11.500h7M3 14.500h7M3 17.500h7" stroke="#5f9ca0" /><path d="M13 10l4 4-4 4z" fill="#eee" /><path d="M18.500 4.500h7v3h-7zM18.500 10.500h7v3h-7zM18.500 16.500h7v3h-7zM18.500 22.500h7v2h-7z" fill="#3c7278" stroke="#5f9ca0" /></>,
  ripB: <><path d="M2.500 4.500h7v3h-7zM2.500 10.500h7v3h-7zM2.500 16.500h7v3h-7zM2.500 22.500h7v2h-7z" fill="#4f8f8c" stroke="#88c8d0" /><path d="M13 10l4 4-4 4z" fill="#fff" /><path d="M18.500 7.500h7v13h-7z" fill="#2d6468" stroke="#14343c" /><path d="M18 11.500h8M18 14.500h8M18 17.500h8" stroke="#14343c" /></>,
  undo: <path d="M12 20.500h7.500v-10H10M13 6.500l-4 4 4 4" stroke="#d05050" strokeWidth="2" />,
  redo: <path d="M16 20.500H8.500v-10H18M15 6.500l4 4-4 4" stroke="#d05050" strokeWidth="2" />,
  metro: <><path d="M14 6l7 17H7z" fill="#66686c" /><path d="M14 12l7 11H7z" fill="#a8b4dc" /><path d="M13.500 5v14" stroke="#ddd" /><path d="M14 17l2 3h-4z" fill="#fff" /></>,
  snap: <><path d="M8.500 6v17" stroke="#17263e" /><path d="M10 10h6a4 4 0 0 1 0 8h-6" stroke="#17263e" strokeWidth="3" /></>,
  triplet: <><path d="M4.500 16v-3.500H9M19 12.500h4.500V16" stroke={W} /><text x="14" y="16" textAnchor="middle" fontSize="9" fontStyle="italic" fontWeight="bold" fontFamily="DejaVu Sans" fill={W}>3</text></>,
  dotted: <><ellipse cx="12.500" cy="20" rx="3.500" ry="2.500" fill="#8a8a8c" /><path d="M15.500 20V7" stroke="#8a8a8c" /><path d="M18 20h2v2h-2z" fill="#fff" /></>,
}

const Note = ({ kind }) => {
  const c = kind === 0 || kind === 1 || kind === 6 ? '#6e6e6e' : '#111'
  if (kind === 0) return <Svg><ellipse cx="14" cy="18" rx="5" ry="3" stroke={c} strokeWidth="1.500" /></Svg>
  const flags = [0, 0, 0, 1, 2, 2, 4][kind]
  return (
    <Svg>
      <ellipse cx="12.500" cy="20" rx="3" ry="2.200" fill={kind === 1 ? 'none' : c} stroke={c} />
      <path d="M15.500 20V6" stroke={c} />
      {[...Array(flags)].map((_, i) => <path key={i} d={`M15 ${6 + i * 4}q1 3 5 5q2 2 0 5q0-3-5-6z`} fill={c} />)}
    </Svg>
  )
}

const RecIcon = () => <Svg s={10}><circle cx="5" cy="5" r="3.500" fill="#6c0000" /></Svg>
const PowerIcon = () => <Svg s={12}><path d="M3.500 3a4 4 0 1 0 5 0M6 1v5" stroke="#25272c" strokeOpacity="0.700" /></Svg>
const RouteIcon = ({ c = '#b8bac0' }) => (
  <Svg w={16} h={12}>
    <path d="M1 1h2v2H1zM4 1h2v2H4zM1 4h2v2H1z" fill={c} />
    <path d="M7.500 4v5M5.500 6.500l2 2 2-2M10 7.500h5M12.500 5v5" stroke={c} />
  </Svg>
)
const EnvIcon = () => (
  <Svg w={12} h={10}>
    <path d="M2 8l3-5h2l3 5" stroke={W} />
    <circle cx="2" cy="8" r="1.300" fill={W} /><circle cx="6" cy="2.500" r="1.500" fill={W} /><circle cx="10" cy="8" r="1.300" fill={W} />
  </Svg>
)
const Caret = () => <Svg w={6} h={8}><path d="M0 0h6L3 3z" fill={W} /></Svg>
const SpeakIcon = () => <Svg w={14} h={10}><circle cx="4" cy="5" r="2.500" fill={W} /><path d="M8 2q2 3 0 6M11 1q3 4 0 8" stroke={W} /></Svg>
const InIcon = () => <Svg w={12} h={10}><path d="M0 4h4V1l4 4-4 4V6H0z" fill={W} /><path d="M8 .5h2.500v9H8" stroke={W} /></Svg>
const Knob = ({ pan }) => (
  <Svg s={16}>
    <circle cx="8" cy="8" r={pan ? 7 : 6} fill="#a3a4a6" stroke="#26272a" />
    {pan ? <path d="M8.500 2v4" stroke="#222" /> : <path d="M8 9h3v2H8z" fill="#555" />}
  </Svg>
)

/* ---------- data ---------- */

const toolGroups = [
  ['blocks', 'envCycle', 'envX', 'redDown'],
  ['copy', 'paste'],
  ['QUANTIZE TOOL', 'quantWave', 'diamond', 'tom', 'scissors', 'star'],
  ['mono'],
  ['markM', 'markR'],
  ['freeze', 'unfreeze'],
  ['envEye', 'envNew', 'envSee', 'envKnob', 'envNote', 'envVol'],
  ['shapeLine', 'shapeFast', 'shapeSlow', 'shapeS', 'shapeSquare', 'shapeIn', 'shapeOut'],
  ['EDITOR', 'loopBack', 'dots', 'heightTool', 'waveUpDown', 'waveDots', 'wavePlain'],
  ['takes', 'glue', 'cut'],
]

const leftTools = ['lock', 'grid', 'crossfade', 'grouping', 'moveEnv', 'ripA', 'ripB', 'undo', 'redo', 'metro', 'snap']
const pressed = ['crossfade', 'grouping', 'ripB', 'snap', 'envEye']

const STEP = 14.98
const times = ['0:00', '0:16', '0:32', '0:48', '1:04', '1:20', '1:36', '1:52', '2:08', '2:24', '2:40', '2:56', '3:12']

const actions = [
  ['SWS/wol: Adjust envelope or track height under mouse cursor, zoom center to mouse cursor (MIDI CC relative/mouse...'],
  ['SWS/wol: Adjust selected envelope height, zoom center to middle arrange (MIDI CC relative/mousewheel)'],
  ['SWS/wol: Adjust selected envelope height, zoom center to mouse cursor (MIDI CC relative/mousewheel)'],
  ['SWS/wol: Adjust selected envelope or last touched track height, zoom center to middle arrange (MIDI CC relative/mo...'],
  ['SWS/wol: Adjust selected envelope or last touched track height, zoom center to mouse cursor (MIDI CC relative/mou...'],
  ['SWS/wol: Full zoom selected envelope (in media lane only) to lower half in time selection'],
  ['SWS/wol: Full zoom selected envelope (in media lane only) to upper half in time selection'],
  ['SWS/wol: Full zoom selected envelope in time selection'],
  ['SWS/wol: Horizontal zoom selected envelope in time selection'],
  ['SWS/wol: Toggle enable extended zoom for envelopes in track lane', 'on'],
  ['SWS/wol: Vertical zoom selected envelope (in media lane only) to lower half'],
  ['SWS/wol: Vertical zoom selected envelope (in media lane only) to upper half'],
  ["SWS: Toggle zoom to selected items (ignore last track's envelope lanes)", 'off'],
  ["SWS: Toggle zoom to selected items or time selection (ignore last track's envelope lanes)", 'off'],
  ["SWS: Toggle zoom to selected items or time selection, hide other tracks (ignore last track's envelope lanes)", 'off'],
  ["SWS: Toggle zoom to selected items or time selection, minimize other tracks (ignore last track's envelope lanes)", 'off'],
  ["SWS: Toggle zoom to selected items, hide other tracks (ignore last track's envelope lanes)", 'off'],
  ["SWS: Toggle zoom to selected items, minimize other tracks (ignore last track's envelope lanes)", 'off'],
  ["SWS: Toggle zoom to selected tracks and time selection (ignore last track's envelope lanes)", 'off'],
  ["SWS: Toggle zoom to selected tracks and time selection, hide others (ignore last track's envelope lanes)", 'off'],
  ["SWS: Toggle zoom to selected tracks and time selection, minimize others (ignore last track's envelope lanes)", 'off'],
  ["SWS: Vertical zoom to selected items (ignore last track's envelope lanes)"],
  ["SWS: Vertical zoom to selected items, minimize others (ignore last track's envelope lanes)"],
  ["SWS: Vertical zoom to selected tracks (ignore last track's envelope lanes)"],
]

/* ---------- parts ---------- */

const Tool = ({ name }) => icons[name]
  ? <ToolButton aria-label={name} $on={pressed.includes(name)}><Svg>{icons[name]}</Svg></ToolButton>
  : <ToolButton $w={58}>{name}</ToolButton>

const TransportBar = () => (
  <Transport>
    <Svg w={13} h={50}>
      {[0, 1, 2, 3, 4, 5].map(i => (
        <path key={i} transform={`translate(0 ${i * 8 + 1})`} d="M5.500 .5h-5v6h5v-3h-3M12.500 .5h-5v6h5v-3h-3" stroke="#303135" />
      ))}
    </Svg>
    <PlayWell>
      <PlayGroup>
        <PlayButton aria-label="Go to start"><Svg w={30} h={27}><path d="M11.500 8v11" stroke={W} /><path d="M20 8v11l-6-5.500z" fill={W} /></Svg></PlayButton>
        <PlayButton aria-label="Play" $dark><Svg w={30} h={27}><path d="M12 7v13l8-6.500z" fill={W} /></Svg></PlayButton>
        <PlayButton aria-label="Pause"><Svg w={30} h={27}><path d="M11 8h2v11h-2zM17 8h2v11h-2z" fill={W} /></Svg></PlayButton>
        <PlayButton aria-label="Stop"><Svg w={30} h={27}><path d="M10 8h10v10H10z" fill={W} /></Svg></PlayButton>
        <PlayButton aria-label="Go to end"><Svg w={30} h={27}><path d="M18.500 8v11" stroke={W} /><path d="M10 8v11l6-5.500z" fill={W} /></Svg></PlayButton>
      </PlayGroup>
      <PlayGroup>
        <PlayButton aria-label="Record" $dark><Svg w={30} h={27}><circle cx="14" cy="13" r="5.500" fill={W} /></Svg></PlayButton>
      </PlayGroup>
    </PlayWell>
    <LoopAuto>
      <LoopButton>LOOP<Svg w={20} h={14}><path d="M5 10H2V4h12M7 11h10V5h-3" stroke="#44526e" strokeWidth="2" /><path d="M12 1l5 3-5 3zM9 8l-5 3 5 3z" fill="#44526e" /></Svg></LoopButton>
      <LoopButton>AUTO<Svg w={28} h={14}><path d="M3 11l5-6 5 5" stroke="#44526e" strokeWidth="1.500" /><circle cx="3" cy="11" r="2" fill="#44526e" /><circle cx="8" cy="4" r="2" fill="#44526e" /><circle cx="13" cy="10" r="2" fill="#44526e" /><path d="M19 3h7l-3.500 4z" fill="#44526e" /></Svg></LoopButton>
    </LoopAuto>
    <BpmWell>
      <BpmInner>
        <BpmBox $left>BPM</BpmBox>
        <BpmBox>120</BpmBox>
      </BpmInner>
    </BpmWell>
    <BigTime><strong>1.1.00 / 0:00.000</strong><span>[Stopped]</span></BigTime>
    <Shuttle>
      <Svg w={412} h={29}>
        <path d="M13 14.500h386M13.500 11v8M398.500 11v8" stroke="#93a3c4" />
        <path d="M205.500 0v29" stroke="#8a94a8" />
        <path d="M200.500 12V7.500h4M207 7.500h3.500v4M200.500 17v4.500h4M207 21.500h3.500v-4" stroke="#c4cad6" />
        <path d="M205.500 10v9" stroke="#e4e8f0" />
      </Svg>
    </Shuttle>
    <InfoWell $gap={4} $pad={4}><InfoLabel $w={25}>Rate:</InfoLabel><DarkBox $w={36}>1.0</DarkBox></InfoWell>
    <InfoWell $gap={15} $pad={3}><DarkBox $w={30}>4/4</DarkBox></InfoWell>
    <InfoWell $gap={14} $pad={4} $bleed>
      <InfoLabel $w={43}>Selection:</InfoLabel>
      <DarkBox $w={68}>25.1.00</DarkBox>
      <DarkBox $w={68}>33.1.00</DarkBox>
      <DarkBox $w={38}>8</DarkBox>
    </InfoWell>
  </Transport>
)

const Track = ({ n, on }) => (
  <TrackBox $on={on}>
    <TrackNo $on={on}>{n}</TrackNo>
    <Stack>
      <NameInput aria-label={`Track ${n} name`} $on={on} />
      <Fader $w={185}>
        <label htmlFor={`vol${n}`}>0dB</label>
        <Slider id={`vol${n}`} type="range" defaultValue="66" />
      </Fader>
      <InRow>
        <InputPick $on={on}>
          <select aria-label={`Track ${n} input`}><option>Juli@ 1/2:L</option></select>
          <Svg w={12} h={15}><path d="M0 0h12v15H0z" fill="#3c3d42" /><path d="M3 6h6L6 9z" fill="#eee" /></Svg>
        </InputPick>
        <Small aria-label="Monitor"><SpeakIcon /></Small>
      </InRow>
    </Stack>
    <KnobColumn>
      <Svg w={14} h={10}><path d="M3 2h3l1 1h4v4H3z" fill="#2a2c33" fillOpacity="0.700" /></Svg>
      <Knob pan />
      <Knob />
    </KnobColumn>
    <Cells>
      <Small aria-label="Record arm"><RecIcon /></Small>
      <Small>M</Small>
      <Small>S</Small>
      <Small $dark aria-label="Routing"><RouteIcon /></Small>
      <Small $sunk aria-label="FX bypass"><PowerIcon /></Small>
      <Small><Fx>FX</Fx></Small>
      <Small $dark aria-label="Input"><InIcon /></Small>
      <Small $w={53}><EnvIcon /><Off>off</Off><Caret /></Small>
    </Cells>
    <SideMeter />
  </TrackBox>
)

const MasterPanel = () => (
  <Master>
    <MasterTop>
      <MasterLabel>MASTER</MasterLabel>
      <Meter>
        <svg width="235" height="23">
          {[...Array(78)].map((_, i) => <rect key={i} x={1 + i * 3} y="1" width="2" height="20" fill={i > 43 ? '#4f5142' : '#3f413f'} />)}
          {[60, 54, 48, 42, 36, 30, 24, 18, 12, 6].map((v, i) => (
            <g key={v} fill={i < 3 ? '#77787a' : i < 6 ? '#a8a8a8' : '#d8d8d8'}>
              <rect x={Math.round(9 + i * 22.6)} y="1" width="1" height="20" opacity="0.700" />
              <text x={9 + i * 22.6} y="14" textAnchor="middle" fontSize="10">-{v}</text>
            </g>
          ))}
        </svg>
        -inf
      </Meter>
    </MasterTop>
    <MasterFaders>
      <Fader $w={195}>
        <label htmlFor="vol0" aria-label="Master volume" />
        <Slider id="vol0" type="range" defaultValue="66" />
      </Fader>
      <Pan />
      <span>0.00dB&nbsp; center</span>
    </MasterFaders>
    <ButtonRow>
      <Small $dark aria-label="Routing"><RouteIcon c="#e8c030" /></Small>
      <Small $w={53}><EnvIcon /><Off>off</Off><Caret /></Small>
      <Small $sunk aria-label="FX bypass"><PowerIcon /></Small>
      <Small><Fx>FX</Fx></Small>
      <Small aria-label="Mono"><Svg w={14} h={10}><circle cx="5" cy="5" r="3.500" stroke={W} /><circle cx="9" cy="5" r="3.500" stroke={W} /></Svg></Small>
      <Small>M</Small>
      <Small>S</Small>
    </ButtonRow>
  </Master>
)

const Timeline = () => {
  const ticks = [...Array(160)].map((_, i) => Math.round(i * STEP))
  const selX = ticks[24]
  const selW = ticks[32] - selX
  return (
    <Arrange>
      <Strip $h={13} $c="#404145" />
      <Strip $h={13} $c="#8c94b0" />
      <Strip $h={10} $c="#73855a" />
      <Ruler>
        <svg width="100%" height="30">
          <rect x={selX} y="26" width={selW} height="4" fill="#a9cdfb" />
          <path d={`M${selX} 20.500h9l-9 9zM${selX + selW} 20.500h-9l9 9z`} fill="#a9cdfb" fillOpacity="0.600" stroke="#000" />
          <rect x={selX} y="25" width={selW} height="1" fill="#000" />
          {ticks.map((x, i) => <rect key={x} x={x} y={i % 8 ? 22 : 0} width="1" height="30" fill="#000" />)}
          <path d="M0 2h9l-9 9z" fill="#d86068" stroke="#f0c8c8" />
          <rect x="0" y="3" width="1" height="27" fill="#e03838" />
        </svg>
        {times.map((t, i) => (
          <Mark key={t} style={{ width: ticks[i * 8 + 8] - ticks[i * 8] }}>
            <strong>{i * 8 + 1}.1.00</strong>
            <span>{t}.000</span>
          </Mark>
        ))}
      </Ruler>
      <Canvas>
        <Lane $h={74} />
        <LaneGap />
        <Lane $h={72} $light />
        <Lane $h={339} $light />
        <Lane $h={70} />
        <Lane $h={70} $light />
        <Lane $h={70} />
        <Lane $h={70} $light />
        <svg width="100%" height="100%">
          <defs>
            <pattern id="dots" width="1" height="2" patternUnits="userSpaceOnUse">
              <rect width="1" height="1" fill="#000" />
            </pattern>
          </defs>
          {[...Array(15)].map((_, i) => (
            <rect key={i} x="0" y={Math.round(150 + (i + 1) * 20.44)} width="100%" height="1" fill="#3a3d44" />
          ))}
          <rect x={selX} y="0" width={selW} height="100%" fill="rgba(103, 141, 224, 0.55)" />
          {ticks.map(x => <rect key={x} x={x} y="0" width="1" height="100%" fill="url(#dots)" />)}
          <rect x="0" y="314" width="100%" height="164" fill="rgba(255, 128, 64, 0.25)" />
          <rect x="0" y="477" width="100%" height="1" fill="#6a4438" />
          <rect x="0" y="313" width="100%" height="2" fill="#ff7f40" />
          <circle cx="0" cy="314" r="3" stroke="#ff7f40" />
          <rect x="0" y="0" width="1" height="100%" fill="#e03838" />
        </svg>
      </Canvas>
      <HScroll>
        <ScrollLeft aria-label="Scroll left"><Svg w={10} h={8}><path d="M5 1v6L2 4zM9 1v6L6 4z" fill="#c8c8ca" /></Svg></ScrollLeft>
        <ScrollThumb />
      </HScroll>
    </Arrange>
  )
}

const ActionsWindow = () => (
  <Dialog role="dialog" aria-label="Actions">
    <TitleBar>
      <span>Actions</span>
      <Svg w={16} h={18}><path d="M3 1.500h10M5 2v6l-3 3.500h12L11 8V2M8 12v5M7.500 3v5" stroke="#8a8a8a" /></Svg>
      <CloseX>x</CloseX>
    </TitleBar>
    <DialogBody>
      <FilterRow>
        <FilterLabel htmlFor="filter">Filter:</FilterLabel>
        <FilterInput id="filter" defaultValue="zoom envel" />
        <WinButton $w={46}>Clear</WinButton>
        <WinButton $w={81}>Find shortcut...</WinButton>
        <SectionLabel htmlFor="section">Section:</SectionLabel>
        <SectionPick>
          <select id="section"><option>Main</option></select>
          <Svg w={10} h={8}><path d="M1 2l4 4 4-4" stroke="#444" /></Svg>
        </SectionPick>
      </FilterRow>
      <ListBox>
        <ListTable>
          <thead>
            <tr>
              <th>Shortcut</th>
              <th>Description<Svg w={9} h={6}><path d="M1 5l3.500-4L8 5" stroke="#555" /></Svg></th>
              <th>State</th>
            </tr>
          </thead>
          <tbody>
            {actions.map(([name, state], i) => (
              <ActionRow key={name} $on={i === 7}>
                <td />
                <td>{name}</td>
                <td>{state}</td>
              </ActionRow>
            ))}
          </tbody>
        </ListTable>
        <VScroll>
          <Svg w={16} h={17}><path d="M5 11l3-4 3 4" stroke="#444" strokeWidth="1.500" /></Svg>
          <VThumb />
          <Svg w={16} h={17}><path d="M5 6l3 4 3-4" stroke="#444" strokeWidth="1.500" /></Svg>
        </VScroll>
      </ListBox>
      <Bottom>
        <Shortcuts>
          <legend>Shortcuts for selected action</legend>
          <ShortcutList />
          <WinButton $w={52}>Add...</WinButton>
          <WinButton $w={52} disabled>Delete</WinButton>
        </Shortcuts>
        <RightButtons>
          <span>Custom actions:</span>
          <WinButton $w={60}>New...</WinButton>
          <WinButton $w={60} disabled>Edit...</WinButton>
          <WinButton $w={60} disabled>Delete</WinButton>
          <WinButton $w={60} disabled>Copy</WinButton>
          <span>ReaScript:</span>
          <WinButton $w={60}>New...</WinButton>
          <WinButton $w={60}>Load...</WinButton>
          <WinButton $w={60} disabled>Edit...</WinButton>
          <WinButton $w={60} disabled>Delete</WinButton>
        </RightButtons>
      </Bottom>
      <Footer>
        <WinButton>Import/export...</WinButton>
        <WinButton>Menu editor...</WinButton>
        <WinButton $main>Run</WinButton>
        <WinButton>Run/close</WinButton>
        <WinButton>Close</WinButton>
      </Footer>
    </DialogBody>
  </Dialog>
)

const TaskbarRow = () => (
  <Taskbar>
    <TaskButton aria-label="Start"><Svg s={16}><path d="M0 2l7-1v6.500H0zM8 1l8-1v7.500H8zM0 8.500h7V15l-7-1zM8 8.500h8V16l-8-1z" fill="#fff" /></Svg></TaskButton>
    <TaskButton aria-label="Search"><Svg s={18}><circle cx="11" cy="7" r="5" stroke="#fff" strokeWidth="1.500" /><path d="M7.500 10.500L1 17" stroke="#fff" strokeWidth="1.500" /></Svg></TaskButton>
    <TaskButton $w={52} aria-label="Files"><Svg w={22} h={20}><path d="M0 1h9l2 2h11v16H0z" fill="#e8a820" /><path d="M0 5h22v14H0z" fill="#fbd866" /><path d="M4 19v-8h14v8h-4v-4H8v4z" fill="#3b9ade" /></Svg></TaskButton>
    <TaskButton $w={49} aria-label="AIMP"><Svg s={22}><circle cx="11" cy="11" r="10" fill="#f5a418" stroke="#111" strokeWidth="2" /><path d="M5 14.500L11 5l6 9.500h-7l2-3.500" stroke="#111" strokeWidth="2" /></Svg></TaskButton>
    <TaskButton $on $run aria-label="REAPER"><Svg s={22}><path d="M3 5q8-9 17 0l-7 2-5-3z" fill="#3592cf" /><path d="M1 6l8 1q4 6 2 14Q1 17 1 6z" fill="#6cc23a" /><path d="M9 5q5-2 12 1 0 11-9 15 2-9-3-16z" fill="#b8574e" /><path d="M3 5q9 0 8 16" stroke="#e8ece4" strokeWidth="1.500" /></Svg></TaskButton>
    <TaskButton $run $w={40} aria-label="Chrome"><Svg s={22}><circle cx="11" cy="11" r="11" fill="#f3c52f" /><path d="M11 11L1.500 5.500A11 11 0 0 1 20.500 6H11z" fill="#d94f43" /><path d="M1.500 5.500A11 11 0 0 0 10 22l5-8.500H6.500z" fill="#3aa757" /><circle cx="11" cy="11" r="4.500" fill="#4c8bf5" stroke="#fff" strokeWidth="1.500" /></Svg></TaskButton>
    <Tray>
      <Svg w={12} h={8}><path d="M1 7l5-5 5 5" stroke="#fff" strokeWidth="1.200" /></Svg>
      <Svg s={16}><path d="M5 3.500h10.500v8H4M1 1.500h4v4H1zM3 6v8M6 14.500h8M10 12v3" stroke="#fff" /></Svg>
      <Svg s={16}><circle cx="8" cy="8" r="7.500" fill="#cfd2d6" /><path d="M3 6h10v4H3z" fill="#4e6490" /><path d="M4 9l4-3M9 9l3-3" stroke="#fff" /></Svg>
      <Svg w={17} h={14}><path d="M1 5h2l4-4v12L3 9H1z" stroke="#fff" /><path d="M9 5q1.500 2 0 4M11.500 3q3 4 0 8M14 1q4 6 0 12" stroke="#fff" /></Svg>
      <span>ENG</span>
      <Clock><div>8:37</div><div>01.02.20</div></Clock>
    </Tray>
  </Taskbar>
)

const App = () => (
  <Page>
    <GlobalStyle />
    <TabBar><AddTab aria-label="New project">+</AddTab><Tab>*[Unsaved]</Tab></TabBar>
    <TransportBar />
    <Toolbar>
      <Group>
        {['trash', 'tracklist', 'mixer', 'home', 'RENDER'].map(n => <Tool key={n} name={n} />)}
      </Group>
      <Palette aria-label="Colors" />
      {toolGroups.map(g => <Group key={g[0]}>{g.map(n => <Tool key={n} name={n} />)}</Group>)}
      <ToolButton>Inser empt</ToolButton>
      <ToolButton>VCA</ToolButton>
    </Toolbar>
    <Columns>
      <Left>
        <LeftTools>
          <Group>{leftTools.map(n => <Tool key={n} name={n} />)}</Group>
          <NoteRow>
            <Notes>
              {[0, 1, 2, 3, 4, 5, 6].map(k => <NoteButton key={k} aria-label={`Note ${k}`} $dark={k === 3}><Note kind={k} /></NoteButton>)}
            </Notes>
            <Tool name="triplet" />
            <Tool name="dotted" />
          </NoteRow>
        </LeftTools>
        <MasterPanel />
        <Tracks>
          <Track n={1} on />
          <EnvBox>
            <EnvHead>
              <EnvName>Volume</EnvName>
              <EnvButton $w={18}>bp</EnvButton>
              <EnvButton $w={14} aria-label="Close envelope"><Svg s={8}><path d="M0 0l8 8M8 0L0 8" stroke="#d5cfd1" /></Svg></EnvButton>
            </EnvHead>
            <EnvBody>
              <EnvButton $w={19}>A</EnvButton>
              <EnvSlider type="range" defaultValue="50" aria-label="Envelope value" />
              <span>0.00dB</span>
            </EnvBody>
          </EnvBox>
          {[2, 3, 4, 5, 6].map(n => <Track key={n} n={n} />)}
        </Tracks>
        <Status>Envelope: Volume 0.00dB at 33.1.42 / 1:04.207</Status>
      </Left>
      <Splitter />
      <Timeline />
    </Columns>
    <TaskbarRow />
    <ActionsWindow />
  </Page>
)

export default App
